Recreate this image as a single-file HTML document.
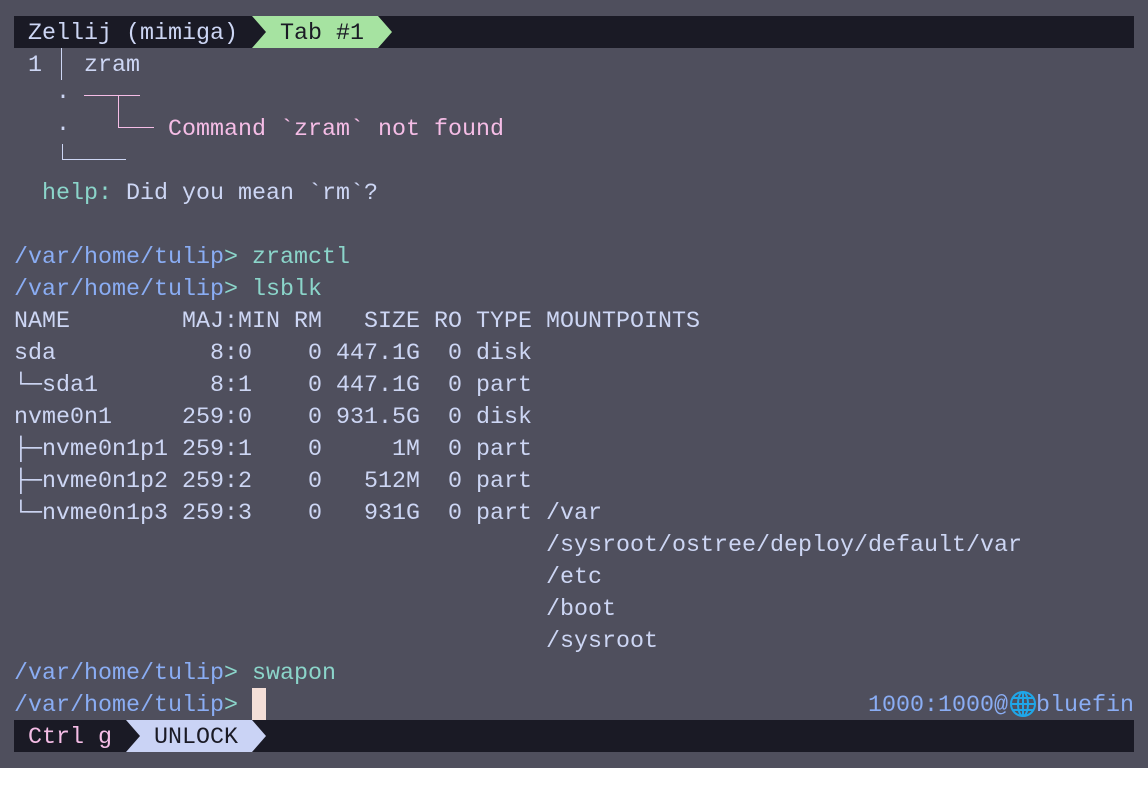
<!DOCTYPE html>
<html><head><meta charset="utf-8"><style>
html,body{margin:0;padding:0;}
body{width:1148px;height:800px;background:#fff;position:relative;overflow:hidden;font-family:"Liberation Mono","DejaVu Sans Mono",monospace;font-size:23.33px;}
#term{position:absolute;left:0;top:0;width:1148px;height:768px;background:#4f4f5d;}
.r{position:absolute;left:14px;height:32px;line-height:32px;padding-top:2px;box-sizing:border-box;white-space:pre;color:#cdd6f4;}
.bar{position:absolute;left:14px;width:1120px;height:32px;background:#1a1a25;}
.b{color:#8aadf4}.g{color:#8bd5ca}.p{color:#f5bde6}
.ln{position:absolute;background:#f5bde6;}
.lw{position:absolute;background:#cdd6f4;}
</style></head><body>
<div id="term">
<div class="bar" style="top:16px"></div>
<div class="r" style="top:16px;color:#cdd6f4"> Zellij (mimiga) </div>
<svg style="position:absolute;left:252px;top:16px" width="142" height="32"><polygon points="0,0 126,0 140,16 126,32 0,32 14,16" fill="#a6e3a1"/></svg>
<div class="r" style="top:16px;left:280px;color:#1a1a25">Tab #1</div>

<div class="r" style="top:48px"> 1   zram</div>
<div class="lw" style="left:61px;top:48px;width:1px;height:32px"></div>
<div class="r" style="top:80px;color:#cdd6f4">   ·</div>
<div class="ln" style="left:84px;top:95px;width:56px;height:1px"></div>
<div class="ln" style="left:118px;top:95px;width:1px;height:32px"></div>
<div class="ln" style="left:118px;top:127px;width:36px;height:1px"></div>
<div class="r" style="top:112px">   ·       <span class="p">Command `zram` not found</span></div>
<div class="lw" style="left:62px;top:144px;width:1px;height:15px"></div>
<div class="lw" style="left:62px;top:159px;width:64px;height:1px"></div>
<div class="r" style="top:176px">  <span class="g">help:</span> Did you mean `rm`?</div>

<div class="r" style="top:240px"><span class="b">/var/home/tulip</span><span class="g">&gt; zramctl</span></div>
<div class="r" style="top:272px"><span class="b">/var/home/tulip</span><span class="g">&gt; lsblk</span></div>
<div class="r" style="top:304px">NAME        MAJ:MIN RM   SIZE RO TYPE MOUNTPOINTS</div>
<div class="r" style="top:336px">sda           8:0    0 447.1G  0 disk</div>
<div class="r" style="top:368px">└─sda1        8:1    0 447.1G  0 part</div>
<div class="r" style="top:400px">nvme0n1     259:0    0 931.5G  0 disk</div>
<div class="r" style="top:432px">├─nvme0n1p1 259:1    0     1M  0 part</div>
<div class="r" style="top:464px">├─nvme0n1p2 259:2    0   512M  0 part</div>
<div class="r" style="top:496px">└─nvme0n1p3 259:3    0   931G  0 part /var</div>
<div class="r" style="top:528px">                                      /sysroot/ostree/deploy/default/var</div>
<div class="r" style="top:560px">                                      /etc</div>
<div class="r" style="top:592px">                                      /boot</div>
<div class="r" style="top:624px">                                      /sysroot</div>
<div class="r" style="top:656px"><span class="b">/var/home/tulip</span><span class="g">&gt; swapon</span></div>
<div class="r" style="top:688px"><span class="b">/var/home/tulip</span><span class="g">&gt; </span></div>
<div style="position:absolute;left:252px;top:688px;width:14px;height:32px;background:#f4dfd8"></div>
<div class="r b" style="top:688px;left:868px">1000:1000@  bluefin</div>
<svg style="position:absolute;left:1009px;top:690px" width="28" height="28" viewBox="0 0 28 28" fill="none" stroke="#1fa6e8" stroke-width="2"><circle cx="14" cy="14" r="12"/><ellipse cx="14" cy="14" rx="5" ry="12"/><line x1="14" y1="2" x2="14" y2="26"/><line x1="2" y1="14" x2="26" y2="14"/><line x1="4" y1="8" x2="24" y2="8"/><line x1="4" y1="20" x2="24" y2="20"/></svg>

<div class="bar" style="top:720px"></div>
<div class="r p" style="top:720px"> Ctrl g </div>
<svg style="position:absolute;left:126px;top:720px" width="142" height="32"><polygon points="0,0 126,0 140,16 126,32 0,32 14,16" fill="#cad3f5"/></svg>
<div class="r" style="top:720px;left:154px;color:#1a1a25">UNLOCK</div>
</div>
</body></html>
